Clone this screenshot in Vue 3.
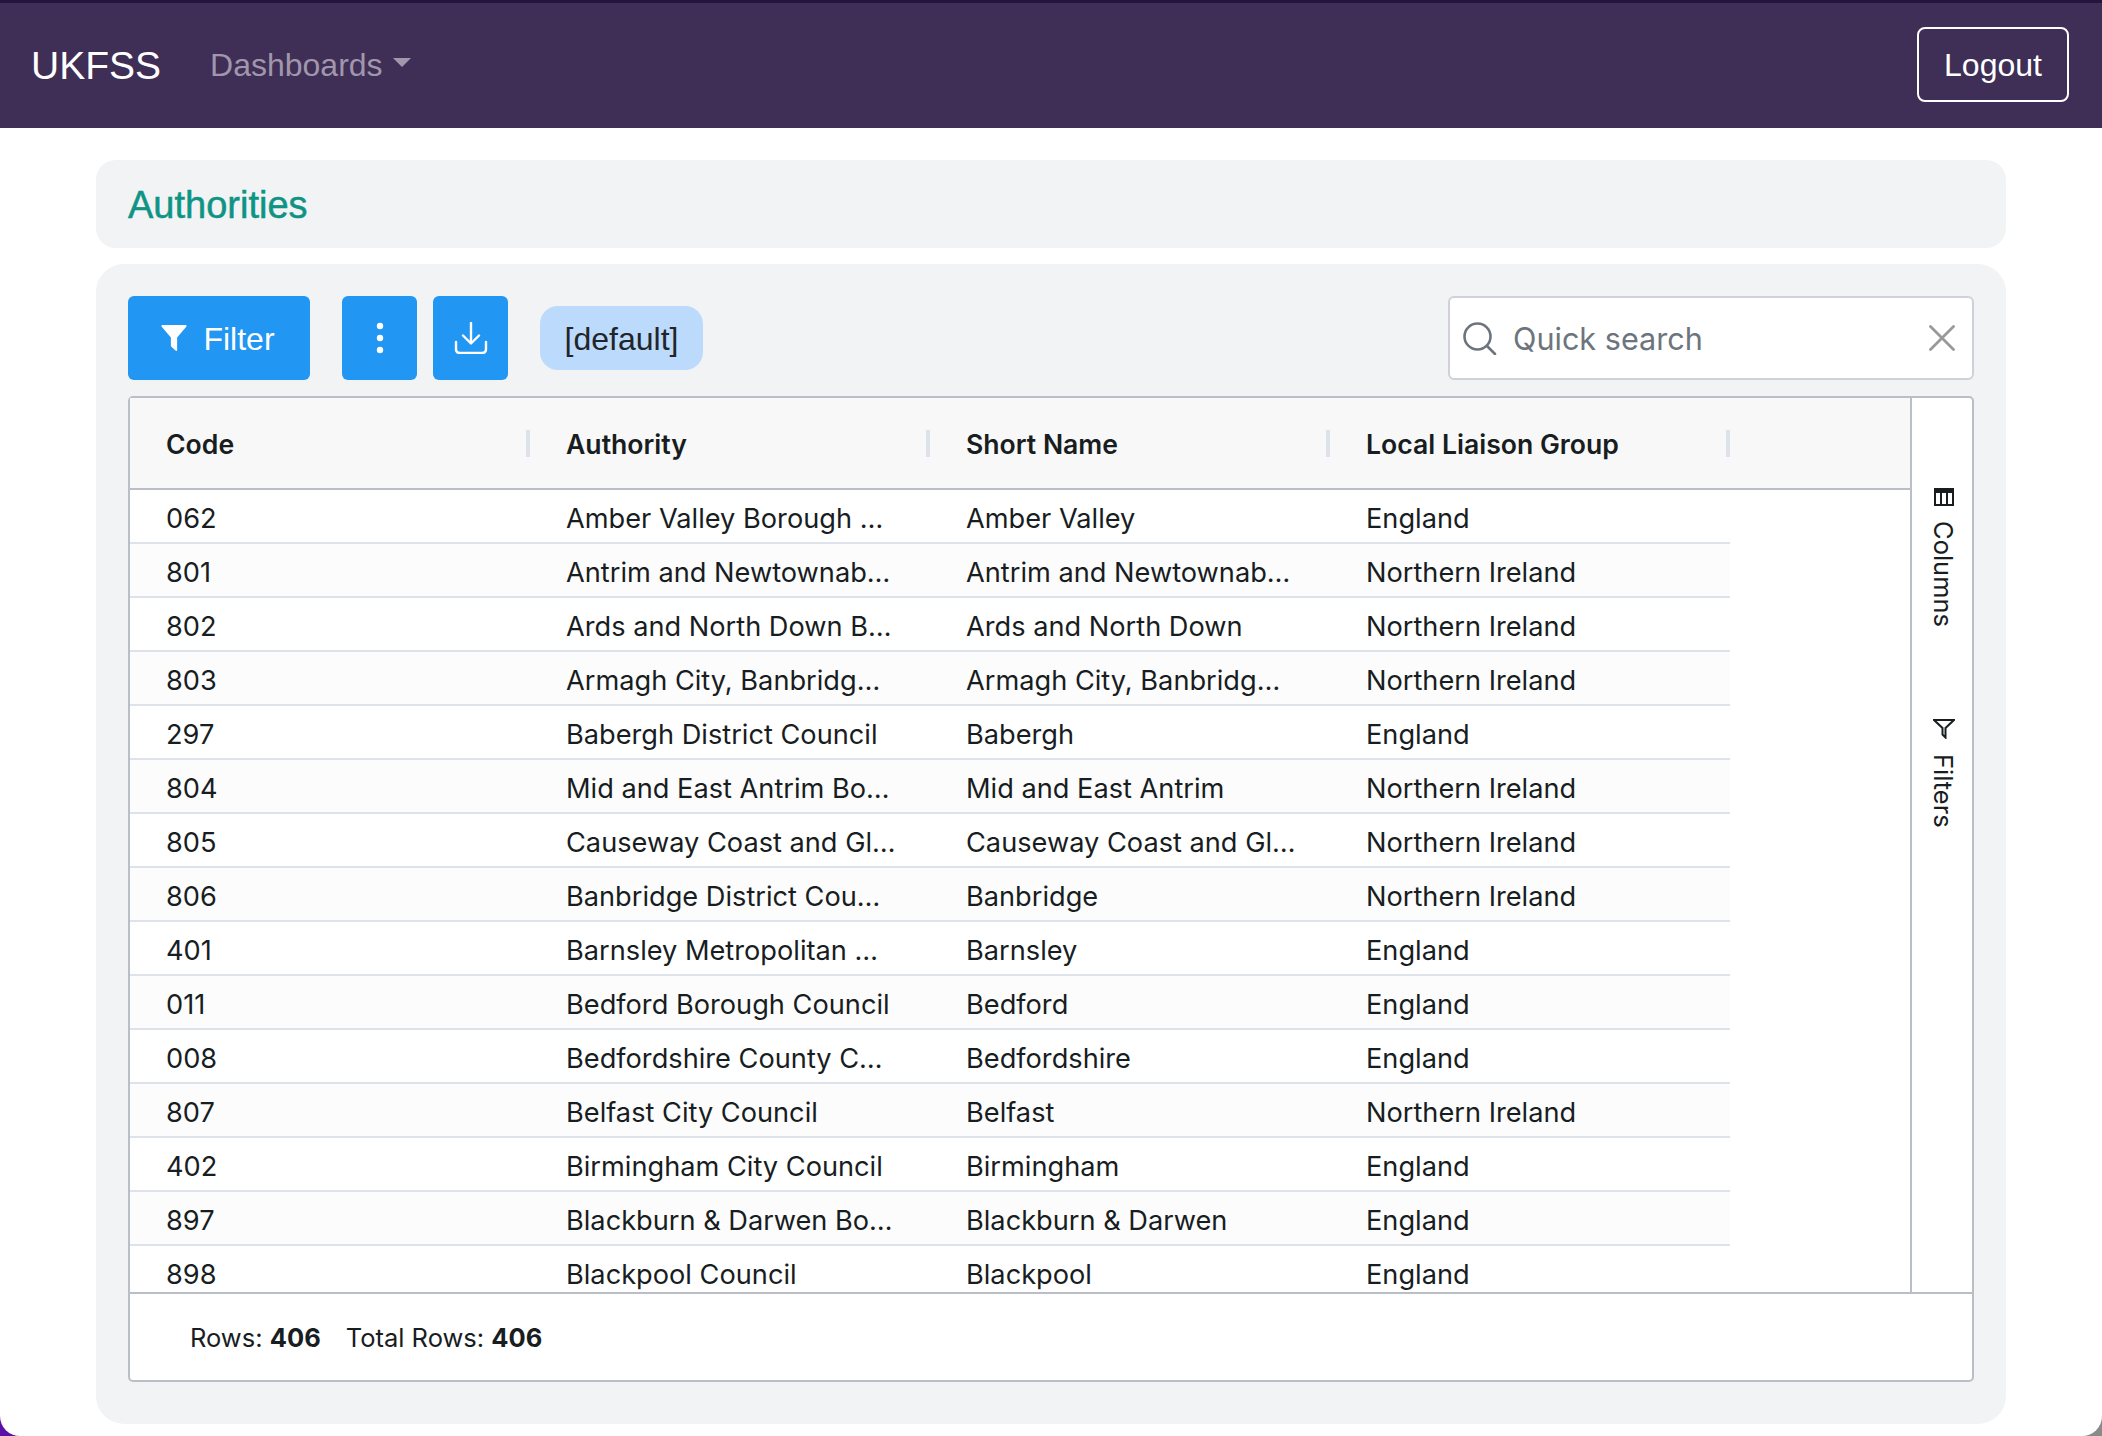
<template>
  <div class="page">
    <nav class="navbar">
      <span class="brand">UKFSS</span>
      <a class="nav_link">Dashboards<span class="caret"></span></a>
      <button class="logout">Logout</button>
    </nav>
    <main class="content">
      <section class="panel title_panel">
        <h1>Authorities</h1>
      </section>
      <section class="panel grid_panel">
        <div class="toolbar">
          <button class="btn filter_btn">
            <svg class="filter_icon" viewBox="0 0 25 25"><path d="M1.500 0H23.500Q25 0 24.500 1.500L15.500 12V24Q15.500 25.500 14 24.500L10.500 21.500Q9.500 21 9.500 19.500V12L0.500 1.500Q0 0 1.500 0Z" fill="#fff"/></svg>
            <span>Filter</span>
          </button>
          <button class="btn icon_btn">
            <svg width="8" height="32" viewBox="0 0 8 32"><circle cx="4" cy="4" r="3.2" fill="#fff"/><circle cx="4" cy="16" r="3.2" fill="#fff"/><circle cx="4" cy="28" r="3.2" fill="#fff"/></svg>
          </button>
          <button class="btn icon_btn">
            <svg width="34" height="32" viewBox="0 0 34 32" fill="none" stroke="#fff" stroke-width="2.4" stroke-linecap="round" stroke-linejoin="round"><path d="M17 1V21M9 13.500L17 21.500L25 13.500"/><path d="M2 20V27Q2 31 6 31H28Q32 31 32 27V20"/></svg>
          </button>
          <span class="pill">[default]</span>
          <div class="search">
            <svg class="search_icon" width="34" height="33" viewBox="0 0 34 33" fill="none" stroke="#6c757d" stroke-width="2.6" stroke-linecap="round"><circle cx="14.500" cy="14.500" r="13"/><path d="M24 24L32 32"/></svg>
            <span class="search_text">Quick search</span>
            <svg width="26" height="26" viewBox="0 0 26 26" stroke="#999" stroke-width="2.800" stroke-linecap="round"><path d="M1.500 1.500L24.500 24.500M24.500 1.500L1.500 24.500"/></svg>
          </div>
        </div>
        <div class="grid">
          <div class="grid_main">
            <div class="grid_table">
              <div class="grid_header">
                <div class="head_cell" v-for="col in columns" :key="col">{{ col }}</div>
              </div>
              <div class="grid_body">
                <div class="row" v-for="row in rows" :key="row[0]">
                  <div class="cell" v-for="(val, i) in row" :key="i">{{ val }}</div>
                </div>
              </div>
            </div>
            <div class="side_bar">
              <div class="side_tab columns_tab">
                <svg width="20" height="18" viewBox="0 0 20 18"><path fill-rule="evenodd" d="M0 0H20V18H0ZM2 5V16H6V5ZM8 5V16H12V5ZM14 5V16H18V5Z" fill="#181d1f"/></svg>
                <span>Columns</span>
              </div>
              <div class="side_tab filters_tab">
                <svg width="22" height="20" viewBox="0 0 22 20" fill="none" stroke="#181d1f" stroke-width="2"><path d="M1 1H21L12.500 9V18.500L9.500 15.500V9Z"/></svg>
                <span>Filters</span>
              </div>
            </div>
          </div>
          <div class="status_bar">
            <span>Rows: <b>406</b></span>
            <span>Total Rows: <b>406</b></span>
          </div>
        </div>
      </section>
    </main>
  </div>
</template>

<script setup>
const columns = ['Code', 'Authority', 'Short Name', 'Local Liaison Group']

const rows = [
  ['062', 'Amber Valley Borough …', 'Amber Valley', 'England'],
  ['801', 'Antrim and Newtownab…', 'Antrim and Newtownab…', 'Northern Ireland'],
  ['802', 'Ards and North Down B…', 'Ards and North Down', 'Northern Ireland'],
  ['803', 'Armagh City, Banbridg…', 'Armagh City, Banbridg…', 'Northern Ireland'],
  ['297', 'Babergh District Council', 'Babergh', 'England'],
  ['804', 'Mid and East Antrim Bo…', 'Mid and East Antrim', 'Northern Ireland'],
  ['805', 'Causeway Coast and Gl…', 'Causeway Coast and Gl…', 'Northern Ireland'],
  ['806', 'Banbridge District Cou…', 'Banbridge', 'Northern Ireland'],
  ['401', 'Barnsley Metropolitan …', 'Barnsley', 'England'],
  ['011', 'Bedford Borough Council', 'Bedford', 'England'],
  ['008', 'Bedfordshire County C…', 'Bedfordshire', 'England'],
  ['807', 'Belfast City Council', 'Belfast', 'Northern Ireland'],
  ['402', 'Birmingham City Council', 'Birmingham', 'England'],
  ['897', 'Blackburn & Darwen Bo…', 'Blackburn & Darwen', 'England'],
  ['898', 'Blackpool Council', 'Blackpool', 'England'],
]
</script>

<style>
body {
  background: linear-gradient(to right, #5b0fa8 50%, #8a8a8a 50%);
}
</style>

<style scoped>
.page {
  width: 2102px;
  height: 1436px;
  overflow: hidden;
  background: #fff;
  border-radius: 0 0 20px 20px;
  font-family: Inter, "Liberation Sans", sans-serif;
  color: #212529;
}
.navbar {
  display: flex;
  align-items: center;
  box-sizing: border-box;
  height: 128px;
  padding: 0 33px 0 31px;
  background: #3f2e56;
  border-top: 3px solid #24153f;
  font-family: "Liberation Sans", Arial, sans-serif;
}
.brand {
  font-size: 39px;
  color: #fff;
  margin-right: 49px;
}
.nav_link {
  font-size: 32px;
  color: #a097ac;
  display: flex;
  align-items: center;
}
.caret {
  width: 0;
  height: 0;
  margin: -6px 0 0 10px;
  border-top: 9px solid #a097ac;
  border-left: 9px solid transparent;
  border-right: 9px solid transparent;
}
.logout {
  margin-left: auto;
  width: 152px;
  height: 75px;
  margin-top: -3px;
  padding: 2px 0 0;
  box-sizing: border-box;
  background: transparent;
  border: 2px solid #fff;
  border-radius: 8px;
  color: #fff;
  font: inherit;
  font-size: 32px;
}
.content {
  display: flex;
  flex-direction: column;
  gap: 16px;
  padding: 32px 96px 0 96px;
}
.panel {
  background: #f2f3f5;
}
.title_panel {
  height: 88px;
  display: flex;
  align-items: center;
  padding: 3px 32px 0;
  box-sizing: border-box;
  border-radius: 20px;
}
.title_panel h1 {
  margin: 0;
  font-family: "Liberation Sans", Arial, sans-serif;
  font-size: 38px;
  font-weight: 400;
  -webkit-text-stroke: 0.5px #0f9384;
  color: #0f9384;
}
.grid_panel {
  height: 1160px;
  box-sizing: border-box;
  padding: 32px 32px 0 32px;
  border-radius: 28px;
}
.toolbar {
  display: flex;
  align-items: center;
  height: 84px;
}
.btn {
  display: flex;
  align-items: center;
  justify-content: center;
  height: 84px;
  padding: 0;
  border: 0;
  border-radius: 6px;
  background: #2196f3;
  color: #fff;
  font-family: "Liberation Sans", Arial, sans-serif;
  font-size: 32px;
}
.filter_btn {
  width: 182px;
  margin-right: 32px;
  gap: 16px;
}
.filter_btn span {
  padding-top: 2px;
}
.filter_icon {
  width: 26px;
  height: 26px;
  margin-left: -2px;
}
.icon_btn {
  width: 75px;
  margin-right: 16px;
}
.pill {
  display: flex;
  align-items: center;
  justify-content: center;
  width: 163px;
  height: 64px;
  margin-left: 16px;
  padding-top: 2px;
  box-sizing: border-box;
  border-radius: 18px;
  background: #bbdafc;
  font-family: "Liberation Sans", Arial, sans-serif;
  font-size: 32px;
}
.search {
  display: flex;
  align-items: center;
  box-sizing: border-box;
  width: 526px;
  height: 84px;
  margin-left: auto;
  padding: 0 17px 0 13px;
  background: #fff;
  border: 2px solid #ced1d9;
  border-radius: 6px;
}
.search_text {
  flex: 1;
  margin-left: 16px;
  font-size: 30.6px;
  color: #6c757d;
}
.grid {
  margin-top: 16px;
  height: 986px;
  box-sizing: border-box;
  display: flex;
  flex-direction: column;
  background: #fff;
  border: 2px solid #babfc7;
  border-radius: 5px;
  color: #181d1f;
}
.grid_main {
  flex: 1;
  display: flex;
  min-height: 0;
}
.grid_table {
  flex: 1;
  min-width: 0;
  display: flex;
  flex-direction: column;
}
.grid_header {
  display: flex;
  flex: none;
  height: 92px;
  box-sizing: border-box;
  background: #f8f8f8;
  border-bottom: 2px solid #babfc7;
}
.head_cell {
  position: relative;
  box-sizing: border-box;
  width: 400px;
  padding-left: 36px;
  line-height: 93px;
  font-size: 26.6px;
  font-weight: 600;
}
.head_cell::after {
  content: "";
  position: absolute;
  right: 0;
  top: 32px;
  width: 4px;
  height: 27px;
  background: #dde2eb;
}
.grid_body {
  flex: 1;
  overflow: hidden;
}
.row {
  display: flex;
  width: 1600px;
  height: 54px;
  box-sizing: border-box;
  border-bottom: 2px solid #dde2eb;
}
.row:nth-child(even) {
  background: #fcfcfc;
}
.cell {
  box-sizing: border-box;
  width: 400px;
  padding: 3px 0 0 36px;
  line-height: 52px;
  font-size: 27.2px;
  white-space: nowrap;
}
.side_bar {
  flex: none;
  width: 62px;
  border-left: 2px solid #babfc7;
  box-sizing: border-box;
  display: flex;
  flex-direction: column;
  align-items: center;
  padding-left: 3px;
}
.side_tab {
  display: flex;
  flex-direction: column;
  align-items: center;
  gap: 15px;
  font-size: 25.5px;
}
.side_tab span {
  writing-mode: vertical-rl;
}
.columns_tab {
  margin-top: 90px;
}
.filters_tab {
  margin-top: 92px;
}
.status_bar {
  flex: none;
  height: 88px;
  display: flex;
  align-items: center;
  gap: 25px;
  padding-left: 60px;
  border-top: 2px solid #babfc7;
  box-sizing: border-box;
  font-size: 25.5px;
}
</style>
